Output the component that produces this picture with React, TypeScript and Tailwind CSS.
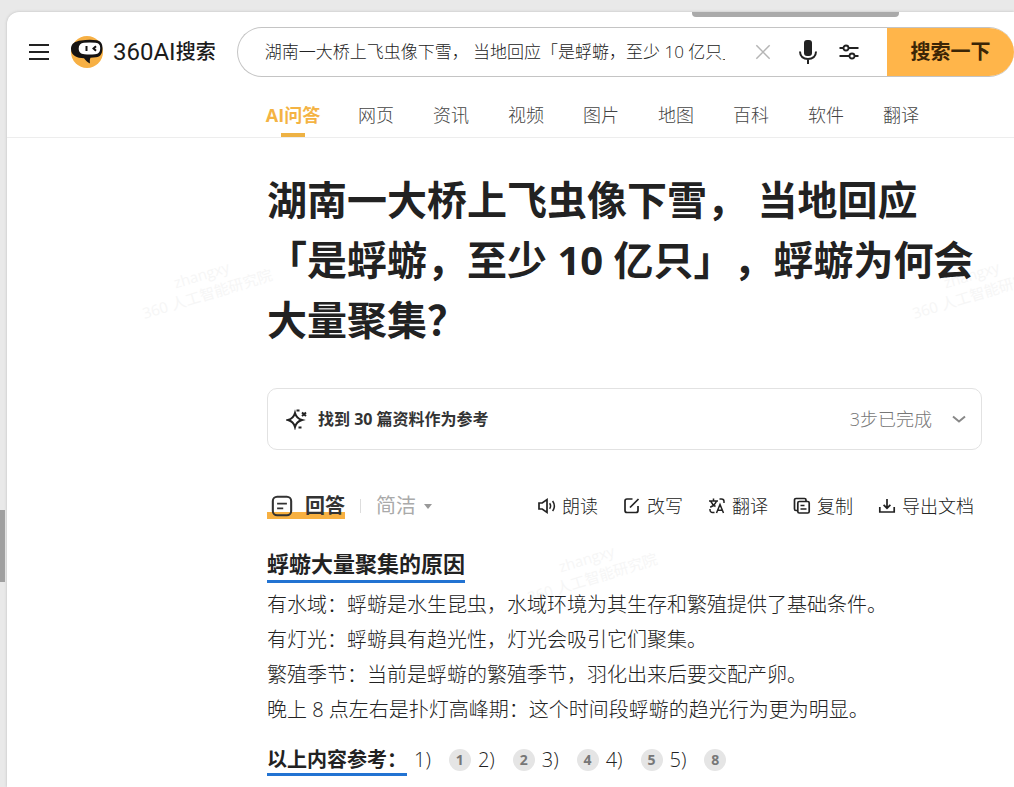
import type { ReactNode } from 'react';

const tabs = ['网页', '资讯', '视频', '图片', '地图', '百科', '软件', '翻译'];

const reasons = [
  '有水域：蜉蝣是水生昆虫，水域环境为其生存和繁殖提供了基础条件。',
  '有灯光：蜉蝣具有趋光性，灯光会吸引它们聚集。',
  '繁殖季节：当前是蜉蝣的繁殖季节，羽化出来后要交配产卵。',
  '晚上 8 点左右是扑灯高峰期：这个时间段蜉蝣的趋光行为更为明显。',
];

const references = [1, 2, 4, 5, 8];

const Icon = ({ children, className = 'w-[18px] h-[18px]' }: { children: ReactNode; className?: string }) => (
  <svg
    viewBox="0 0 18 18"
    className={`shrink-0 ${className}`}
    fill="none"
    stroke="currentColor"
    strokeWidth="1.7"
    aria-hidden="true"
  >
    {children}
  </svg>
);

const actions = [
  {
    label: '朗读',
    icon: (
      <Icon>
        <path d="M1 6h3.2L9 2.6v12.8L4.2 12H1z" />
        <path d="M11.6 6.2q2 2.8 0 5.6M14.6 4q3.6 5 0 10" strokeWidth="1.5" />
      </Icon>
    ),
  },
  {
    label: '改写',
    icon: (
      <Icon>
        <path d="M9.500 2H4a2 2 0 0 0-2 2v9.500a2 2 0 0 0 2 2h9a2 2 0 0 0 2-2V9" />
        <path d="M7 10.500l8.500-8.500" />
      </Icon>
    ),
  },
  {
    label: '翻译',
    icon: (
      <Icon>
        <path d="M1 4h9M5.5 1.5V4M2.2 10.2C5 9 7.6 7 8.4 4M2.6 4.2C4 7 5.5 8.4 7.5 9.500" strokeWidth="1.5" />
        <path
          d="M8.500 16l3.500-8.500L15.500 16M9.600 13.200h4.800M11.500 2h2A2.500 2.500 0 0 1 16 4.500V6M6.500 15.500h-2A2.500 2.500 0 0 1 2 13v-1"
          strokeWidth="1.5"
        />
      </Icon>
    ),
  },
  {
    label: '复制',
    icon: (
      <Icon>
        <path d="M4.500 13.500H3A1.500 1.500 0 0 1 1.500 12V3A1.500 1.500 0 0 1 3 1.500h8.500A1.500 1.500 0 0 1 13 3v1" />
        <rect x="4.8" y="4.500" width="11.400" height="11.500" rx="1.500" />
        <path d="M7.500 8.500h4M7.500 12h6" />
      </Icon>
    ),
  },
  {
    label: '导出文档',
    icon: (
      <Icon>
        <path d="M9 2v9M5.600 7.800L9 11.200l3.400-3.400M1.800 10v5h14.400v-5" />
      </Icon>
    ),
  },
];

const Logo = () => (
  <a href="#" className="flex items-center gap-2 text-[#1b1b1b]">
    <svg viewBox="0 0 36 34" className="w-9 h-[34px]" aria-hidden="true">
      <circle cx="18" cy="17" r="16" fill="#f7b044" />
      <path
        d="M12 5.500q8-1.500 16-.3c4 .7 5.500 4 5.500 7.800 0 5.500-2 9-6.500 9.300l-5.500.4c-.8 1.500-.8 3.500-.5 5.800-2.500-1-4.500-3-6-5.200C8 23 2 20.500 2 14 2 8.500 6 6.300 12 5.500z"
        fill="#151313"
      />
      <path d="M15 7.800q6-.8 11.500 0c3.500.4 4.700 2.200 4.700 5.200 0 4-1.700 6-5.200 6.300q-5.500.5-10.500 0c-4-.4-5.800-2.300-5.800-5.800s1.800-5.300 5.300-5.700z" fill="#fff" />
      <path d="M17.500 11v5M27 11.200l-2.500 2.300 2.500 2.300" fill="none" stroke="#151313" strokeWidth="2" />
    </svg>
    <span className="flex items-center leading-6">
      <span className="font-['Roboto',sans-serif] text-2xl leading-6">360AI</span>
      <span className="text-xl leading-6 font-medium">搜索</span>
    </span>
  </a>
);

const Header = () => (
  <header className="flex items-center pt-[15px] pl-[22px]">
    <button type="button" aria-label="菜单" className="flex flex-col gap-[5px] w-5 mr-5">
      <span className="h-0.5 w-full bg-[#222]" />
      <span className="h-0.5 w-full bg-[#222]" />
      <span className="h-0.5 w-full bg-[#222]" />
    </button>
    <Logo />
    <form className="flex flex-1 h-[50px] ml-[21px] rounded-full border border-[#c4c4c4] border-r-0 overflow-hidden">
      <input
        type="text"
        aria-label="搜索内容"
        defaultValue="湖南一大桥上飞虫像下雪， 当地回应「是蜉蝣，至少 10 亿只」，蜉蝣为何会大量聚集？"
        className="flex-1 min-w-0 ml-[27px] text-[17px] font-light text-[#222] outline-none [text-spacing-trim:space-all]"
      />
      <div className="flex items-center shrink-0 pl-[30px] pr-7 text-[#222]">
        <button type="button" aria-label="清除" className="mr-7 text-[#b5b5b5]">
          <Icon className="w-4 h-4">
            <path d="M1.500 1.500l15 15M16.500 1.500l-15 15" />
          </Icon>
        </button>
        <button type="button" aria-label="语音搜索" className="mr-[22px]">
          <svg viewBox="0 0 18 26" className="w-[18px] h-[26px]" fill="none" stroke="currentColor" strokeWidth="2" aria-hidden="true">
            <rect x="5" y="1" width="8" height="16" rx="3" fill="currentColor" stroke="none" />
            <path d="M1 12.500C1 17.500 4.500 20 9 20s8-2.500 8-7.500M9 20v5" />
          </svg>
        </button>
        <button type="button" aria-label="筛选">
          <svg viewBox="0 0 20 16" className="w-5 h-4" fill="none" stroke="currentColor" strokeWidth="1.800" aria-hidden="true">
            <path d="M.5 4h4M9.500 4h10M.5 12h10M15.500 12h4" />
            <circle cx="7" cy="4" r="2.500" />
            <circle cx="13" cy="12" r="2.500" />
          </svg>
        </button>
      </div>
      <button type="submit" className="shrink-0 w-[127px] -my-px bg-[#ffb54a] text-xl font-bold text-[#3b2506]">
        搜索一下
      </button>
    </form>
  </header>
);

const Tabs = () => (
  <nav className="flex gap-[39px] mt-[17px] pl-[260px] border-b border-[#ededed] text-lg whitespace-nowrap">
    <a href="#" className="flex flex-col items-center w-[52px] font-bold text-[#f4b343]">
      <span className="h-[39px] leading-[43px]">AI问答</span>
      <span className="w-6 h-1 bg-[#eeb244]" />
    </a>
    {tabs.map((tab) => (
      <a key={tab} href="#" className="leading-[43px] h-[43px] font-light text-[#444]">
        {tab}
      </a>
    ))}
  </nav>
);

const Toolbar = () => (
  <div className="flex items-center mt-[38px] h-9 whitespace-nowrap">
    <h2 className="flex items-center gap-3 h-[26px] pl-1 text-xl font-bold text-[#333] bg-linear-to-b from-transparent from-75% to-[#f7b041] to-75%">
      <Icon className="w-[22px] h-[22px]">
        <rect x="1.500" y="1.500" width="15" height="15" rx="3.500" />
        <path d="M5 7h8M5 11h5" strokeWidth="1.500" />
      </Icon>
      回答
    </h2>
    <span className="w-px h-[14px] ml-[15px] bg-[#ddd]" />
    <button type="button" className="flex items-center gap-2 ml-[15px] text-xl text-[#aaa]">
      简洁
      <span className="border-x-4 border-t-[5px] border-x-transparent border-t-[#999]" />
    </button>
    <div className="flex gap-[25px] ml-auto mr-2 text-lg leading-6 font-light text-[#222]">
      {actions.map((action) => (
        <button key={action.label} type="button" className="flex items-center gap-1.5">
          {action.icon}
          {action.label}
        </button>
      ))}
    </div>
  </div>
);

const Watermark = ({ className }: { className: string }) => (
  <div
    aria-hidden="true"
    className={`absolute -rotate-[17deg] pointer-events-none select-none text-center text-[15px] leading-5 whitespace-nowrap text-[#f6f6f6] ${className}`}
  >
    <p>zhangxy</p>
    <p>360 人工智能研究院</p>
  </div>
);

export default function App() {
  return (
    <div className="relative flex flex-col min-h-screen pt-3 pl-[7px] overflow-hidden bg-[#e9e9e9] font-['Open_Sans','Noto_Sans_CJK_SC',sans-serif]">
      <span className="absolute left-0 top-[510px] w-[5px] h-[72px] bg-[#a0a0a0]" />
      <div className="relative flex-1 bg-white rounded-tl-xl shadow-[0_0_3px_#bbb] overflow-hidden">
        <span className="absolute top-0 right-[115px] w-[207px] h-[5px] rounded-b bg-[#aaa]" />
        <Watermark className="left-[130px] top-[252px]" />
        <Watermark className="left-[515px] top-[536px]" />
        <Watermark className="left-[900px] top-[252px]" />
        <Header />
        <Tabs />
        <main className="relative ml-[260px] mr-8 pt-8 text-[#222]">
          <h1 className="text-[40px] leading-[60px] font-bold [text-spacing-trim:space-all]">
            湖南一大桥上飞虫像下雪， 当地回应「是蜉蝣，至少 10 亿只」，蜉蝣为何会大量聚集？
          </h1>

          <button
            type="button"
            className="flex items-center w-full h-[62px] mt-[38px] pl-[18px] pr-[15px] border border-[#e2e2e2] rounded-[10px]"
          >
            <svg viewBox="0 0 22 22" className="w-[22px] h-[22px]" fill="none" stroke="#222" strokeWidth="2" aria-hidden="true">
              <path d="M9 5q1.500 5.500 7 7-5.500 1.500-7 7-1.500-5.500-7-7 5.500-1.500 7-7z" />
              <path d="M10.500 2.500h3M16 4.500l4 3.500M20 4.500l-4 3.500M12.500 19.500h3" />
            </svg>
            <span className="ml-2.5 text-base font-bold text-[#333]">找到 30 篇资料作为参考</span>
            <span className="ml-auto text-lg font-light text-[#777]">3步已完成</span>
            <svg viewBox="0 0 14 8" className="w-[14px] h-2 ml-5" fill="none" stroke="#888" strokeWidth="2" aria-hidden="true">
              <path d="M1 1.500l6 5 6-5" />
            </svg>
          </button>

          <Toolbar />

          <section className="mt-[21px] text-xl">
            <h3 className="w-fit h-[38px] text-[22px] leading-9 font-bold border-b-[3px] border-[#2273d2]">
              蜉蝣大量聚集的原因
            </h3>
            <div className="mt-1 leading-[35px] font-light">
              {reasons.map((reason) => (
                <p key={reason}>{reason}</p>
              ))}
            </div>
            <div className="flex items-center mt-[17px] h-8 whitespace-nowrap">
              <strong className="h-8 leading-8 border-b-[3px] border-[#2273d2]">以上内容参考：</strong>
              <ol className="flex gap-[7px] ml-[7px] font-light">
                {references.map((source, index) => (
                  <li key={source} className="flex items-center gap-[18px]">
                    {index + 1})
                    <a
                      href="#"
                      className="flex items-center justify-center w-[22px] h-[22px] rounded-full bg-[#e5e5e5] text-sm font-bold text-[#777]"
                    >
                      {source}
                    </a>
                  </li>
                ))}
              </ol>
            </div>
          </section>
        </main>
      </div>
    </div>
  );
}
